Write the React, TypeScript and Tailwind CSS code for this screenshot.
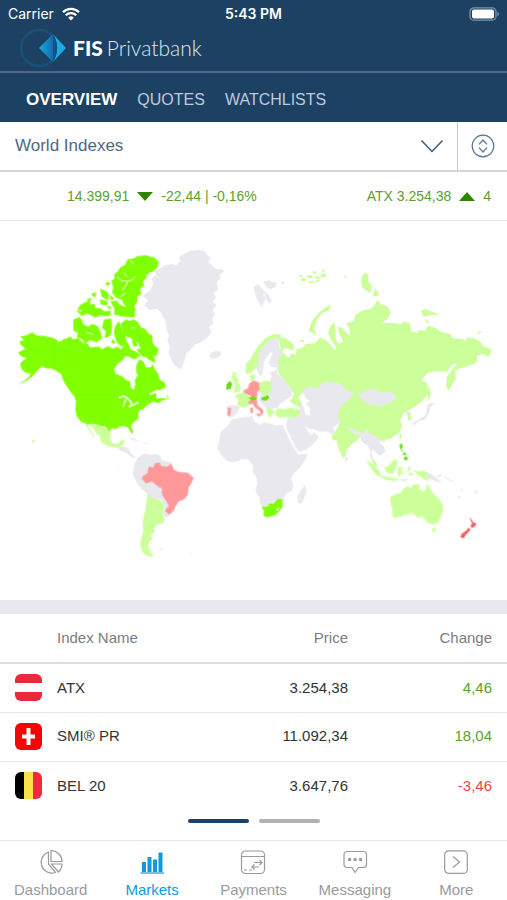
import { useState } from "react";

const UP = "#80ff00";
const SLIGHT_UP = "#ccff99";
const MID_UP = "#66e00a";
const DOWN = "#ff9999";
const STRONG_DOWN = "#f26161";
const NO_DATA = "#e9e8ee";

const rows = [
  { flag: "at", name: "ATX", price: "3.254,38", change: "4,46", up: true },
  { flag: "ch", name: "SMI® PR", price: "11.092,34", change: "18,04", up: true },
  { flag: "be", name: "BEL 20", price: "3.647,76", change: "-3,46", up: false },
];

function StatusBar() {
  return (
    <div className="grid grid-cols-3 items-center h-7 px-2 font-['Inter',sans-serif] text-sm text-white">
      <span className="flex items-center gap-2">
        Carrier
        <svg className="w-[18px] h-[14px]" viewBox="0 0 18 14" fill="none" stroke="white" strokeWidth="2.3">
          <path d="M1 5.2a11.4 11.4 0 0 1 16 0" />
          <path d="M3.8 8.2a7.4 7.4 0 0 1 10.4 0" />
          <path d="M9 13.6 6.2 10.7a4 4 0 0 1 5.6 0z" fill="white" stroke="none" />
        </svg>
      </span>
      <span className="text-center font-semibold">5:43 PM</span>
      <svg className="justify-self-end w-[31px] h-[14px]" viewBox="0 0 31 14" fill="none">
        <rect x="2" y=".8" width="26" height="12.4" rx="4" stroke="#7f94a9" strokeWidth="1.3" />
        <rect x="4" y="2.6" width="22" height="8.8" rx="2" fill="white" />
        <path d="M29.4 4.8c2 .8 2 3.6 0 4.4z" fill="#7f94a9" />
      </svg>
    </div>
  );
}

function Logo() {
  return (
    <div className="flex items-center h-[43px] pl-5 pb-1 text-white text-[21px] font-['Lato',sans-serif]">
      <svg className="w-[48px] h-[42px]" viewBox="0 0 48 42">
        <defs>
          <linearGradient id="logo-left" x1="0" x2="1">
            <stop offset="0" stopColor="#20a7e8" />
            <stop offset="1" stopColor="#126ca9" />
          </linearGradient>
        </defs>
        <circle cx="19" cy="21" r="18" fill="none" stroke="#17629a" strokeWidth="4" opacity=".2" />
        <circle cx="19" cy="21" r="18" fill="none" stroke="#17629a" strokeWidth="1" opacity=".55" />
        <path d="M19 21 33 7v28z" fill="url(#logo-left)" />
        <path d="M33 7 46 21 33 35c5.5-9 5.5-19 0-28z" fill="#20a7e8" />
        <path d="M33 7c5.5 9 5.5 19 0 28z" fill="#104f82" />
      </svg>
      <span className="pl-[5px] font-black">FIS</span>
      <span className="pl-1 font-light text-[#dfe6ee]">Privatbank</span>
    </div>
  );
}

function NavTabs() {
  const tabs = ["OVERVIEW", "QUOTES", "WATCHLISTS"];
  const [active, setActive] = useState("OVERVIEW");

  return (
    <nav className="flex items-center gap-x-5 h-[51px] pt-1 pl-[26px] border-t-2 border-[#4a6885]">
      {tabs.map((tab) => (
        <button
          key={tab}
          onClick={() => setActive(tab)}
          className={tab === active ? "text-[17px] font-bold text-white" : "text-base text-[#bccbdd]"}
        >
          {tab}
        </button>
      ))}
    </nav>
  );
}

function MarketPicker() {
  return (
    <div className="flex h-[50px] border-b-2 border-[#d6d6d8]">
      <div className="relative flex-1">
        <select
          aria-label="Market"
          className="w-full h-full pl-[15px] appearance-none bg-transparent text-[17px] text-[#4d6884] outline-none"
        >
          <option>World Indexes</option>
        </select>
        <svg className="absolute right-[13px] top-[17px] w-6 h-[15px] pointer-events-none" viewBox="0 0 24 15" fill="none" stroke="#37597a" strokeWidth="1.5">
          <path d="m1.5 1.5 10.5 11 10.5-11" />
        </svg>
      </div>
      <button aria-label="Sort" className="w-[50px] border-l border-[#c9c9cc] flex items-center justify-center">
        <svg className="w-6 h-6" viewBox="0 0 24 24" fill="none" stroke="#5a738d" strokeWidth="1.2">
          <circle cx="12" cy="12" r="10.8" />
          <path d="m8 10.3 4-4.3 4 4.3M8 13.7l4 4.3 4-4.3" />
        </svg>
      </button>
    </div>
  );
}

function Ticker() {
  return (
    <div className="flex items-center justify-between h-[49px] pl-[67px] pr-4 border-b border-[#e9e9eb] text-sm text-[#5c9f30] whitespace-nowrap">
      <span className="flex items-center gap-2">
        14.399,91
        <svg className="w-4 h-[9px]" viewBox="0 0 16 9" fill="#2e8500"><path d="M0 0h16L8 9z" /></svg>
        -22,44 | -0,16%
      </span>
      <span className="flex items-center gap-2">
        ATX 3.254,38
        <svg className="w-4 h-[9px]" viewBox="0 0 16 9" fill="#2e8500"><path d="M8 0l8 9H0z" /></svg>
        4
      </span>
    </div>
  );
}

// every region is drawn on its own local grid and then moved into place
function WorldMap() {
  return (
    <svg className="block w-full" viewBox="0 -3 1521 1137" role="img" aria-label="World map of index performance">
      <defs>
        <filter id="coast" x="0" y="0" width="1" height="1" colorInterpolationFilters="sRGB">
          <feTurbulence type="fractalNoise" baseFrequency=".14" numOctaves="2" seed="4" result="noise" />
          <feDisplacementMap in="SourceGraphic" in2="noise" scale="5" xChannelSelector="R" yChannelSelector="G" />
        </filter>
      </defs>
      <g filter="url(#coast)">
        {/* russia, china */}
        <g transform="translate(900 114)" fill={SLIGHT_UP}>
          <path d="M-65 232-40 236-28 245-16 260-22 271-45 264-54 275-40 288-32 294-26 280-12 284-10 266 5 265 18 252 45 250 60 232 72 238 88 250 103 270 110 264 92 238 84 218 92 196 104 188 107 235 114 250 130 245 118 222 113 200 128 205 140 218 152 228 148 206 138 190 162 183 166 165 188 151 212 146 222 138 232 119 242 132 264 140 272 158 262 178 244 190 262 188 288 190 300 193 314 184 330 191 334 215 352 218 356 210 374 212 384 197 408 204 424 216 452 222 456 234 492 238 498 246 500 232 520 234 541 246 548 258 577 270 566 291 548 282 530 288 532 306 506 318 478 326 466 332 467 358 452 380 444 393 439 378 440 352 456 330 473 310 455 315 440 336 402 334 382 339 364 361 382 370 384 402 366 424 340 444 325 450 250 500 160 440 60 420 5 398-6 412 10 436 0 444-30 425-18 402-32 380-64 340-72 300-58 265Z" />
          <path d="M26 212 34 186 54 160 78 141 94 134 88 150 66 160 52 178 42 204 49 226 32 217Z" />
          <path d="M184 55 190 42 200 38 206 48 204 64 216 78 211 98 196 90 184 78ZM218 110 226 85 240 106ZM363 152 376 147 398 156 418 164 395 165 370 170ZM376 176 390 186 379 190ZM530 215 546 214 538 222ZM386 372 392 402 386 428 382 400Z" />
          <path d="M2 55h16v8H2zM22 46h14v8H22zM38 34h12v7H38zM44 50h18v6H44zM62 42h16v8H62zM24 64h22v4H24zM66 30h8v5h-8zM48 60h10v5H48zM-2 45h10v5H-2zM132 48h7v4h-7zM0 240h12v5H0z" />
        </g>
        <g transform="translate(1020 474)">
          <path fill={SLIGHT_UP} d="M-30 90 10 40 60 0 240 20 256 30 230 60 212 82 196 94 190 90 176 100 190 100 186 112 180 118 186 138 180 154 168 166 150 176 134 180 134 188 126 182 112 172 92 164 82 152 62 168 50 182 34 194 20 210 18 226 9 235 2 218-8 194-10 180-22 180-24 166-12 150 0 128Z" />
          <path fill={NO_DATA} d="M16 138 28 143 48 150 60 158 74 158 80 148 92 162 112 172 124 180 120 188 132 200 136 216 120 228 108 218 96 208 94 220 104 242 112 254 104 252 92 232 90 210 82 196 66 186 60 168 48 166 32 152Z" />
          <path fill={NO_DATA} d="M16 228 24 238 20 244 15 238ZM216 130 234 120 256 107 260 86 264 72 284 68 272 80 266 100 254 120 236 122 222 136ZM192 96 206 90 210 100 202 106Z" />
          <path fill={SLIGHT_UP} stroke={SLIGHT_UP} strokeWidth="2" d="M203 102 211 100 214 116 206 122ZM180 165 184 163 184 174 179 176Z" />
        </g>

        {/* north america */}
        <g transform="translate(0 54)" fill={UP}>
          <path d="M60 290 78 286 97 277 110 286 135 288 162 294 178 306 190 298 212 290 218 298 236 294 248 308 264 312 270 322 298 320 306 328 322 318 340 326 352 320 362 328 372 318 376 298 388 316 390 326 400 334 386 350 376 348 368 360 352 372 342 388 348 402 366 408 378 420 390 424 394 446 402 448 406 432 404 420 412 408 408 388 410 372 418 358 430 364 438 382 452 382 458 372 464 388 474 400 478 418 494 428 498 440 482 450 462 454 448 466 464 460 470 462 468 476 482 474 504 476 498 460 508 476 486 482 474 490 460 484 440 496 432 506 418 512 414 522 416 534 402 546 392 556 396 566 401 578 394 580 384 562 370 558 356 560 350 568 336 564 328 576 316 558 300 560 288 552 262 554 242 544 230 528 226 508 228 484 222 464 212 456 198 436 190 422 184 404 168 392 154 386 140 386 126 378 112 392 98 408 80 422 52 436 72 422 88 410 92 400 80 400 66 390 60 372 68 362 80 354 62 348 54 338 76 326 62 314 58 304 72 300Z" />
          <g stroke={UP} strokeWidth="4" strokeLinejoin="round">
            <path d="M344 104 354 96 364 82 376 76 384 60 404 56 414 50 438 48 462 54 474 66 470 82 458 92 444 98 436 114 426 124 430 136 418 144 422 160 410 168 410 184 400 200 382 202 374 192 366 178 350 172 338 158 342 142 336 124 346 116Z" />
            <path d="M364 252 378 240 390 246 400 240 412 248 422 264 434 268 444 282 456 288 454 304 462 318 474 328 468 346 458 342 464 366 448 358 440 350 428 348 412 330 424 326 416 306 402 300 390 290 376 288Z" />
            <path d="M222 240 238 233 244 242 248 254 264 262 278 254 290 258 300 274 304 294 290 304 270 298 256 308 248 296 232 290 236 278 222 270Z" />
            <path d="M232 212 242 196 258 188 270 184 266 194 284 194 282 206 300 206 312 216 330 214 328 226 300 224 286 230 262 218 246 226ZM302 148 316 154 326 166 322 178 308 170ZM318 130 328 128 324 136ZM276 162 288 160 284 170ZM302 180 322 186 320 194 304 192ZM334 186 350 184 358 196 376 202 404 204 402 230 370 228 344 222 346 206ZM314 240 332 238 334 258 330 286 316 292 320 274 308 262ZM346 262 356 246 362 264 372 286 380 310 366 318 352 306 344 280ZM386 330 402 334 420 346 402 356 388 348ZM398 304 406 302 410 316 402 318ZM262 180 272 176 268 182ZM324 200 332 202 328 206ZM338 300 344 308 336 308ZM332 168 340 176 334 178Z" />
          </g>
          <path d="M184 404 196 416 194 424ZM96 602 104 604 100 608ZM214 458 226 466 220 468Z" />
          <g fill="none" stroke="#fff" strokeLinecap="round" strokeLinejoin="round">
            <path strokeWidth="3" d="M352 110 362 122 380 124 396 120 406 110M372 98 380 108M368 150 378 136 384 124M394 264 408 262M260 278 278 282M232 210 244 212M360 170 376 160M448 112 436 104M392 62 400 72" />
            <path strokeWidth="5" d="M358 472 372 468 382 474M376 480 370 498M384 478 392 484 394 492M388 500 404 494M404 492 414 488" />
            <path strokeWidth="5" d="M450 462 470 452 482 454" />
          </g>
          <path fill="none" stroke="#72ea05" strokeWidth="1" d="M162 296V378L176 392M228 466H352M404 486 428 472 448 464" />
        </g>

        {/* greenland, iceland, svalbard */}
        <g transform="translate(390 54)" fill={NO_DATA}>
          <path d="M74 92 92 84 104 76 128 72 136 78 150 64 146 52 162 42 182 32 204 30 224 34 230 44 242 54 236 66 244 74 258 88 272 86 282 94 268 106 272 116 260 126 264 150 250 158 258 172 248 186 260 196 248 210 256 222 246 236 250 250 238 262 244 276 232 292 214 306 192 316 182 330 168 340 164 362 154 388 140 382 126 366 116 338 120 320 112 302 118 284 110 274 106 244 94 218 80 206 58 210 44 196 54 182 38 168 58 152 70 132 64 116 78 104Z" />
          <path d="M234 332 244 338 258 332 270 334 274 344 262 354 246 356 236 348 244 342Z" />
          <path stroke={NO_DATA} strokeWidth="3" d="M372 140 386 134 392 144 402 156 398 166 406 174 400 186 394 200 388 188 380 172ZM402 126 418 122 424 128 438 128 434 142 418 146 408 138ZM404 154 414 166 424 184 416 188 408 170ZM454 126 462 128 458 132Z" />
        </g>

        {/* europe, africa, middle east */}
        <g transform="translate(600 354)">
          <path fill={NO_DATA} d="M168 84 172 48 188 16 204 0 222-6 236-2 240 30 246 44 234 62 236 80 230 98 250 114 262 132 276 152 276 168 258 178 242 190 232 204 206 208 194 200 184 190 176 178 184 160 214 150 208 122 216 108 208 98 226 90 206 92 192 98 186 108 178 106Z" />
          <path fill="#fff" d="M190 84 192 64 200 52 212 36 218 42 212 54 206 66 212 80 232 82 230 90 208 96 196 106 186 108Z" />
          <path fill={NO_DATA} d="M95 238 118 234 158 228 162 244 182 254 190 248 210 250 228 256 248 254 258 276 270 304 286 330 296 344 323 341 318 356 300 382 280 402 274 418 280 434 276 452 260 460 252 470 254 482 244 496 216 500 190 506 180 490 178 472 166 454 172 430 170 414 158 396 160 376 154 370 144 358 126 356 118 362 96 367 76 360 62 342 52 326 58 300 62 276 84 256Z" />
          <path fill={NO_DATA} d="M286 210 302 206 298 196 318 178 310 156 312 146 330 140 358 146 362 132 392 124 424 132 438 150 460 158 450 176 424 196 416 214 414 232 422 248 400 262 404 276 396 284 384 274 358 274 340 268 326 266 314 258 320 270 332 284 342 278 356 290 346 306 320 328 298 336 284 318 272 290 258 264 262 234 288 230ZM314 434 320 452 312 476 304 490 294 488 292 470 302 452Z" />
          <path fill={NO_DATA} d="M474 160 494 156 514 144 544 158 568 154 590 170 574 186 540 200 504 192 484 178Z" />
          <path fill="#fff" d="M304 184 318 176 330 182 318 192 330 202 330 226 316 224 312 206Z" />
          <path fill={UP} d="M185 500 192 514 190 526 200 532 224 526 238 514 248 500 246 478 234 476 222 490 208 492 202 500Z" />
          <path fill="#fff" d="M228 508 234 502 238 506 232 514Z" />
          <path fill={NO_DATA} d="M80 199 96 194 120 200 114 214 104 228 90 234 82 228Z" />
          <path fill={DOWN} d="M84 203 93 204 91 226 82 227Z" />
          <path fill={SLIGHT_UP} stroke={SLIGHT_UP} strokeWidth="2" d="M104 168 122 162 130 156 146 164 148 184 146 198 128 202 112 194 116 178ZM98 98 110 98 106 106 114 118 112 128 122 140 120 152 100 158 106 144 104 128 96 114ZM138 100 138 70 152 58 162 38 176 16 198-6 222-18 244-14 238-4 222-6 204 2 186 20 174 46 172 76 158 94 146 102ZM150 106 164 104 162 118 154 124ZM178 128 204 122 216 130 212 156 190 164 176 152ZM198 206 216 206 222 216 214 226 208 232 202 218ZM226 214 234 206 254 208 272 204 296 210 296 224 284 232 256 230 238 232 228 224Z" />
          <path fill={MID_UP} d="M80 132 90 122 97 132 92 146 78 150Z" />
          <path fill={DOWN} stroke={DOWN} strokeWidth="2" d="M149 130 160 122 176 128 178 148 170 158 172 168 158 172 148 164 134 158 130 152 144 146ZM146 184 160 178 172 182 170 194 188 210 190 216 184 226 180 212 166 202 158 190 148 192ZM168 222 182 222 178 230ZM152 204 158 204 158 218 152 218Z" />
          <path fill={MID_UP} d="M145 172 158 170 172 172 170 178 154 182ZM184 174 204 165 208 174 198 182 184 180Z" />
        </g>

        {/* south east asia, oceania */}
        <g transform="translate(1020 474)" fill={SLIGHT_UP}>
          <path d="M150 352 164 344 182 338 190 326 204 318 212 324 222 312 240 314 236 326 250 334 258 328 262 310 272 328 282 342 296 356 308 374 310 390 302 412 292 430 278 434 260 428 254 416 244 410 236 414 218 400 194 404 180 410 164 414 157 408 158 390 152 372ZM276 444 288 444 286 456 277 455Z" />
          <path stroke={SLIGHT_UP} strokeWidth="2" d="M80 244 92 248 108 264 120 276 122 290 108 284 94 264ZM120 288 140 290 158 294 176 298 168 302 138 299ZM134 262 148 256 158 244 168 238 172 252 164 268 160 280 140 278ZM96 238 108 250 112 262 102 256ZM176 262 190 262 182 268 190 284 180 280 178 290 173 282ZM222 270 236 276 248 272 262 278 262 302 246 292 232 284ZM204 262 210 262 210 272 204 270ZM206 280 218 280 218 284 206 284Z" />
          <path fill={MID_UP} d="M178 194 186 190 188 202 182 210ZM184 208 190 214 186 216ZM190 234 200 228 204 238 196 242ZM186 222 194 216 200 224 192 226Z" />
          <path fill={NO_DATA} stroke={NO_DATA} strokeWidth="2" d="M262 278 280 286 292 296 302 306 284 302 272 296 262 300ZM180 300 204 296 196 303ZM290 288 306 282 300 290ZM312 288 342 306 330 302ZM352 346 362 352 358 356ZM364 326 368 334 363 332ZM402 336 412 332 408 340Z" />
          <path fill={STRONG_DOWN} d="M387 411 396 420 400 428 410 430 404 440 396 444 391 438 396 430ZM387 442 391 450 376 466 372 475 361 472 364 462 378 452Z" />
        </g>

        {/* latin america */}
        <g transform="translate(240 564)">
          <path fill={NO_DATA} d="M164 158 174 142 196 130 212 134 228 132 242 140 244 150 274 158 284 178 246 212 250 252 266 290 270 312 262 322 248 318 254 292 244 268 206 266 202 250 186 238 170 218 158 192ZM110 112 128 108 146 116 152 130 166 140 160 146 142 130 122 122ZM142 84 160 84 182 96 166 92ZM188 98 208 100 202 104ZM236 418 248 414 242 422Z" />
          <path fill={DOWN} d="M185 206 190 196 202 190 206 170 220 172 224 160 238 157 244 168 262 170 274 160 280 178 296 186 324 188 341 204 334 220 326 232 324 254 312 268 296 274 286 290 282 302 268 315 254 302 266 288 258 272 246 254 246 236 230 226 216 214 198 220Z" />
          <path fill={SLIGHT_UP} d="M202 248 208 262 222 266 240 268 252 284 250 306 248 318 254 328 248 340 230 344 222 354 224 366 212 374 218 386 208 396 204 410 212 428 222 438 206 441 190 430 180 406 184 384 190 366 188 334 196 300 200 272ZM14 38 22 42 30 58 46 82 38 76 22 54ZM26 42 44 44 62 46 74 54 84 58 93 70 90 90 100 102 116 100 120 92 134 90 130 104 112 113 92 110 76 104 62 96 60 80 46 66 38 52Z" />
          <path fill={NO_DATA} d="M116 176 122 178 118 180ZM330 430 336 430 333 434Z" />
        </g>
      </g>
    </svg>
  );
}

function Flag({ code }: { code: string }) {
  return (
    <svg className="w-[27px] h-[27px] rounded-md" viewBox="0 0 27 27">
      {code === "at" && (
        <>
          <path fill="#e92a3a" d="M0 0h27v27H0z" />
          <path fill="#fff" d="M0 9h27v9H0z" />
        </>
      )}
      {code === "ch" && (
        <>
          <path fill="#fe0000" d="M0 0h27v27H0z" />
          <path fill="#fff" d="M11.5 5h4v6.500H20v4h-4.500V22h-4v-6.500H7v-4h4.500z" />
        </>
      )}
      {code === "be" && (
        <>
          <path fill="#000" d="M0 0h9v27H0z" />
          <path fill="#fce24a" d="M9 0h9v27H9z" />
          <path fill="#ec2c3c" d="M18 0h9v27h-9z" />
        </>
      )}
    </svg>
  );
}

function IndexTable() {
  return (
    <table className="w-full text-[15px] text-[#333] border-collapse">
      <thead>
        <tr className="h-[49px] border-b-2 border-[#dcdcde] text-[#7c7c7f]">
          <td className="w-[57px]" />
          <th className="text-left font-normal">Index Name</th>
          <th className="text-right font-normal">Price</th>
          <th className="w-[159px] pr-[15px] text-right font-normal">Change</th>
        </tr>
      </thead>
      <tbody>
        {rows.map((row) => (
          <tr key={row.name} className="h-[49px] border-b border-[#e8e8ea] last:border-b-0">
            <td className="pl-[15px]"><Flag code={row.flag} /></td>
            <td>{row.name}</td>
            <td className="text-right">{row.price}</td>
            <td className={row.up ? "pr-[15px] text-right text-[#5c9f30]" : "pr-[15px] text-right text-[#f04444]"}>
              {row.change}
            </td>
          </tr>
        ))}
      </tbody>
    </table>
  );
}

const tabItems = [
  {
    label: "Dashboard",
    icon: (
      <>
        <path d="M10.5 3A10.8 10.8 0 1 0 17.5 23.5L10.5 15z" />
        <path d="M13 1.5V12.5h11C24 6.5 19 1.5 13 1.5z" />
        <path d="M13.5 15H24c0 3-1.5 6-3.5 8z" />
      </>
    ),
  },
  {
    label: "Markets",
    icon: (
      <>
        <path d="M3 13h4v10H3zM8.500 8h4v15h-4zM14 10.500h4V23h-4zM19.500 3.500h4V23h-4z" fill="currentColor" stroke="none" />
        <path d="M1.500 24h23.500" />
      </>
    ),
  },
  {
    label: "Payments",
    icon: (
      <>
        <rect x="1.5" y="2" width="23" height="22.5" rx="4" />
        <path d="M1.5 7.5h23M4 21h3M9 21h3M14 13.5h8m-2.5-2.5 2.5 2.5-2.5 2.5M19 18h-7m2.5-2.5L12 18l2.5 2.5" />
      </>
    ),
  },
  {
    label: "Messaging",
    icon: (
      <>
        <path d="M5 2.5h16.5a3 3 0 0 1 3 3v10a3 3 0 0 1-3 3h-5L13 23.5l-3-5H5a3 3 0 0 1-3-3v-10a3 3 0 0 1 3-3z" />
        <path d="M7.5 10.5h.1M13 10.5h.1M18.6 10.5h.1" strokeWidth="3.4" strokeLinecap="round" />
      </>
    ),
  },
  {
    label: "More",
    icon: (
      <>
        <rect x="1.7" y="1.8" width="22.6" height="22.6" rx="4" />
        <path d="m10 7.500 6.500 5.500-6.500 5.500" />
      </>
    ),
  },
];

function TabBar() {
  const [active, setActive] = useState("Markets");

  return (
    <footer className="grid grid-cols-5 h-[60px] border-t border-[#e4e4e6]">
      {tabItems.map((item) => (
        <button
          key={item.label}
          onClick={() => setActive(item.label)}
          className={
            item.label === active
              ? "flex flex-col items-center pt-2 text-[15px] text-[#0f9ade]"
              : "flex flex-col items-center pt-2 text-[15px] text-[#9a9a9d]"
          }
        >
          <svg className="w-[26px] h-[26px]" viewBox="0 0 26 26" fill="none" stroke="currentColor" strokeWidth="1.2">
            {item.icon}
          </svg>
          <span className="leading-[30px]">{item.label}</span>
        </button>
      ))}
    </footer>
  );
}

export default function App() {
  return (
    <div className="min-h-screen flex flex-col bg-white font-['Liberation_Sans',Arial,sans-serif]">
      <header className="bg-[#1d4162]">
        <StatusBar />
        <Logo />
        <NavTabs />
      </header>

      <main className="flex-1">
        <MarketPicker />
        <Ticker />
        <WorldMap />
        <div className="h-[14px] bg-[#e9e8ed]" />
        <IndexTable />
        <div className="flex justify-center gap-[10px] pt-[9px]">
          <button aria-label="Page 1" className="w-[61px] h-1 rounded-full bg-[#1d4162]" />
          <button aria-label="Page 2" className="w-[61px] h-1 rounded-full bg-[#b2b2b4]" />
        </div>
      </main>

      <TabBar />
    </div>
  );
}
